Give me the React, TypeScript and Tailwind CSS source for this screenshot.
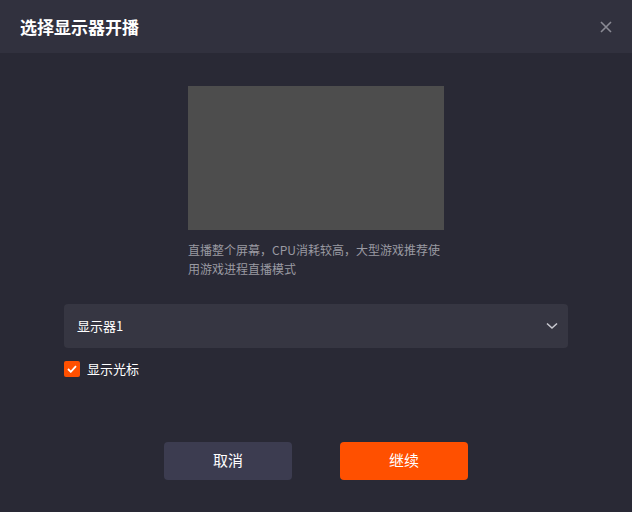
import React, { useState } from 'react';

const font = { fontFamily: '"Noto Sans CJK SC", "Noto Sans", sans-serif' };

export default function App() {
  const [showCursor, setShowCursor] = useState(true);

  return (
    <div className="w-[632px] h-[512px] bg-[#292935] flex flex-col" style={font}>
      {/* Header */}
      <div className="h-[53px] bg-[#31313e] flex items-center justify-between pl-5 pr-[18px]">
        <h1 className="text-[17px] font-bold text-white">选择显示器开播</h1>
        <button className="w-4 h-4 flex items-center justify-center text-[#8a8a94]">
          <svg width="12" height="12" viewBox="0 0 12 12" fill="none" stroke="currentColor" strokeWidth="1.6">
            <path d="M1 1l10 10M11 1L1 11" />
          </svg>
        </button>
      </div>

      {/* Body */}
      <div className="flex flex-col items-center pt-[33px]">
        <div className="w-[256px] h-[144px] bg-[#4d4d4d]" />
        <p className="w-[256px] mt-[10px] text-[12px] leading-[19px] text-[#9a9aa2]">
          直播整个屏幕，CPU消耗较高，大型游戏推荐使用游戏进程直播模式
        </p>
      </div>

      <div className="px-16 mt-[26px]">
        <div className="h-11 rounded bg-[#363642] flex items-center justify-between pl-[13px] pr-[10px]">
          <span className="text-[13px] text-white">显示器1</span>
          <svg width="12" height="8" viewBox="0 0 12 8" fill="none" stroke="#c8c8cf" strokeWidth="1.6">
            <path d="M1 1.5l5 4.5 5-4.5" />
          </svg>
        </div>

        <label className="mt-[11px] flex items-center gap-[7px] cursor-pointer" onClick={() => setShowCursor(!showCursor)}>
          <span className={`w-4 h-4 rounded-[2px] flex items-center justify-center ${showCursor ? 'bg-[#ff5000]' : 'border border-[#666]'}`}>
            {showCursor && (
              <svg width="10" height="8" viewBox="0 0 10 8" fill="none" stroke="white" strokeWidth="1.8">
                <path d="M1 4l2.8 2.8L9 1.2" />
              </svg>
            )}
          </span>
          <span className="text-[13px] text-white">显示光标</span>
        </label>
      </div>

      {/* Footer */}
      <div className="flex justify-center gap-12 mt-[63px]">
        <button className="w-32 h-[38px] rounded bg-[#3c3c50] text-[15px] text-white">取消</button>
        <button className="w-32 h-[38px] rounded bg-[#ff5000] text-[15px] text-white">继续</button>
      </div>
    </div>
  );
}
